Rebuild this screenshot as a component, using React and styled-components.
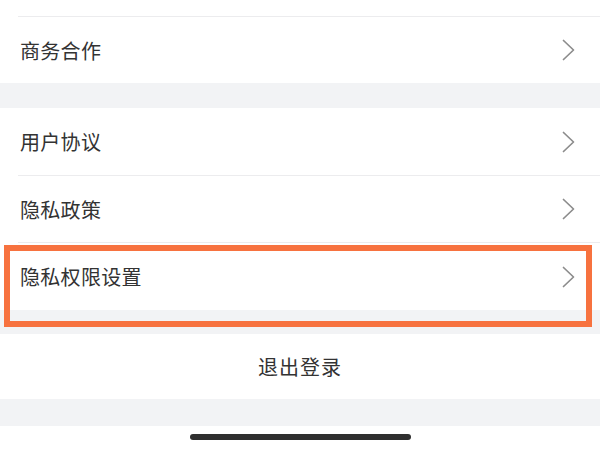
import React from "react";
import styled, { createGlobalStyle } from "styled-components";

const GlobalStyle = createGlobalStyle`
  html, body {
    margin: 0;
    padding: 0;
    background: #f2f3f5;
  }
  body {
    font-family: "Noto Sans CJK SC", "Noto Sans", sans-serif;
    -webkit-font-smoothing: antialiased;
  }
`;

const Screen = styled.div`
  width: 600px;
  height: 450px;
  overflow: hidden;
  display: flex;
  flex-direction: column;
  background: #f2f3f5;
`;

const Group = styled.div`
  background: #fff;
  margin-top: ${({ gap }) => gap || 0}px;
`;

const Stub = styled.div`
  height: 16px;
  background: #fff;
`;

const Row = styled.div`
  position: relative;
  padding-left: 18px;
  background: #fff;
`;

const RowInner = styled.div`
  height: ${({ h }) => h}px;
  display: flex;
  align-items: center;
  justify-content: space-between;
  padding: 0 25px 0 2px;
  border-top: ${({ divided }) => (divided ? "1px solid #ececee" : "none")};
  box-sizing: border-box;
`;

const Label = styled.span`
  font-size: 20px;
  color: #333;
  letter-spacing: 0.3px;
`;

const Highlight = styled.div`
  position: absolute;
  left: 4px;
  right: 8px;
  top: 3px;
  bottom: -17px;
  border: 6px solid #f7723f;
  pointer-events: none;
`;

const Logout = styled.button`
  margin-top: 24px;
  height: 65px;
  border: none;
  background: #fff;
  font-family: inherit;
  font-size: 20px;
  color: #333;
  letter-spacing: 1px;
  cursor: pointer;
`;

const Footer = styled.div`
  margin-top: 27px;
  flex: 1;
  background: #fff;
  display: flex;
  justify-content: center;
  padding-top: 8px;
`;

const HomeBar = styled.div`
  width: 221px;
  height: 6px;
  border-radius: 3px;
  background: #2f2f2f;
`;

const Chevron = () => (
  <svg width="13" height="22" viewBox="0 0 13 22" fill="none">
    <polyline
      points="1.5,1.5 11.5,11 1.5,20.5"
      stroke="#8c8c8c"
      strokeWidth="1.7"
      strokeLinecap="round"
      strokeLinejoin="round"
    />
  </svg>
);

const MenuRow = ({ label, h, divided, highlighted }) => (
  <Row>
    <RowInner h={h} divided={divided}>
      <Label>{label}</Label>
      <Chevron />
    </RowInner>
    {highlighted && <Highlight />}
  </Row>
);

export default function App() {
  return (
    <Screen>
      <GlobalStyle />
      <Stub />
      <Group>
        <MenuRow label="商务合作" h={67} divided />
      </Group>
      <Group gap={25}>
        <MenuRow label="用户协议" h={67} />
        <MenuRow label="隐私政策" h={67} divided />
        <MenuRow label="隐私权限设置" h={68} divided highlighted />
      </Group>
      <Logout>退出登录</Logout>
      <Footer>
        <HomeBar />
      </Footer>
    </Screen>
  );
}
